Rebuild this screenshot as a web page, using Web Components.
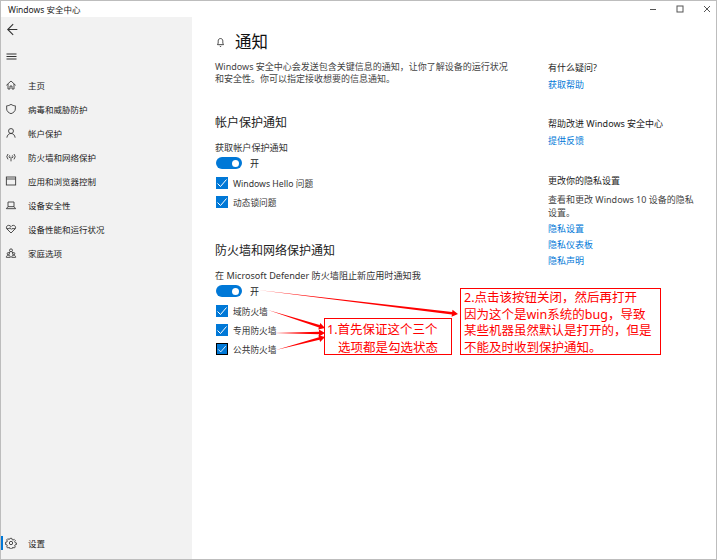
<!DOCTYPE html>
<html lang="zh">
<head>
<meta charset="utf-8">
<title>Windows 安全中心</title>
<style>
  html, body { margin: 0; background: #fff; }
  body { font-family: "Noto Sans", "Noto Sans CJK SC", sans-serif; color: #1f1f1f; }
</style>
</head>
<body>
<win-app>
  <nav-item slot="nav" icon="home">主页</nav-item>
  <nav-item slot="nav" icon="shield">病毒和威胁防护</nav-item>
  <nav-item slot="nav" icon="user">帐户保护</nav-item>
  <nav-item slot="nav" icon="wifi">防火墙和网络保护</nav-item>
  <nav-item slot="nav" icon="browser">应用和浏览器控制</nav-item>
  <nav-item slot="nav" icon="laptop">设备安全性</nav-item>
  <nav-item slot="nav" icon="heart">设备性能和运行状况</nav-item>
  <nav-item slot="nav" icon="family">家庭选项</nav-item>
  <nav-item slot="settings" icon="gear" active>设置</nav-item>

  <notify-group title="帐户保护通知" label="获取帐户保护通知" first>
    <check-row>Windows Hello 问题</check-row>
    <check-row>动态锁问题</check-row>
  </notify-group>
  <notify-group title="防火墙和网络保护通知" label="在 Microsoft Defender 防火墙阻止新应用时通知我">
    <check-row>域防火墙</check-row>
    <check-row>专用防火墙</check-row>
    <check-row focused>公共防火墙</check-row>
  </notify-group>

  <help-block slot="aside" title="有什么疑问?">
    <a href="#">获取帮助</a>
  </help-block>
  <help-block slot="aside" title="帮助改进 Windows 安全中心">
    <a href="#">提供反馈</a>
  </help-block>
  <help-block slot="aside" title="更改你的隐私设置" text="查看和更改 Windows 10 设备的隐私设置。">
    <a href="#">隐私设置</a>
    <a href="#">隐私仪表板</a>
    <a href="#">隐私声明</a>
  </help-block>
</win-app>
<note-layer></note-layer>

<script>
const ICONS = {
  back: '<path d="M11 2.500 4.500 9l6.500 6.500M4.500 9H16"/>',
  menu: '<path d="M3 6h12M3 9h12M3 12h12"/>',
  home: '<path d="M2 9.500 9 3l7 6.500M4.500 7.500V15H7.500V10.500H10.500V15H13.500V7.500"/>',
  shield: '<path d="M9 2C7 3.500 4.500 4.200 2.500 4.200V9c0 3.200 2.700 5.700 6.500 7 3.800-1.300 6.500-3.800 6.500-7V4.200C13.500 4.200 11 3.500 9 2Z"/>',
  user: '<circle cx="9" cy="6" r="3.700"/><path d="M2.800 16c.4-3.700 2.900-6.300 6.200-6.300s5.800 2.600 6.200 6.300"/>',
  wifi: '<path d="M9 8.500v7M7 6.500a3 3 0 0 0 0 4M11 6.500a3 3 0 0 1 0 4M4.500 4.500a6 6 0 0 0 0 8M13.500 4.500a6 6 0 0 1 0 8"/>',
  browser: '<rect x="2" y="3" width="14" height="12"/><path d="M2 6h14"/>',
  laptop: '<path d="M4.500 4.500h9v7h-9zM4.500 11.500l-2.500 3h14l-2.500-3"/>',
  heart: '<path d="M9 15 2.800 8.800C1.300 7.100 2.200 3.500 5.500 3.500 7.200 3.500 8.300 4.500 9 5.500c.7-1 1.800-2 3.500-2 3.300 0 4.200 3.600 2.700 5.300Z"/><path d="M2.500 8.500h4l1-1.500 2 2.500 1-1h5"/>',
  family: '<circle cx="9" cy="5" r="2.200"/><circle cx="5" cy="10" r="1.700"/><circle cx="13" cy="10" r="1.700"/><path d="M6 9.500 7.500 7M12 9.500 10.500 7M2 15.500c0-2 1.200-3.200 3-3.200s3 1.200 3 3.200zM10 15.500c0-2 1.200-3.200 3-3.200s3 1.200 3 3.200z"/>',
  gear: '<circle cx="9" cy="9" r="2.500"/><path d="M7.800 2h2.400l.4 1.900 1.500.7 1.700-1 1.700 1.700-1 1.700.7 1.500 1.900.4v2.400l-1.900.4-.7 1.500 1 1.700-1.700 1.700-1.700-1-1.500.7-.4 1.900H7.800l-.4-1.900-1.500-.7-1.700 1-1.700-1.700 1-1.700-.7-1.500-1.900-.4V7.900l1.900-.4.700-1.500-1-1.700 1.700-1.700 1.700 1 1.500-.7Z"/>',
  bell: '<path d="M9 2.500c-2.500 0-3.800 1.800-3.800 4.200v3.300L4 12.500h10l-1.200-2.500V6.700c0-2.400-1.300-4.200-3.800-4.200ZM7.500 14.500c.4.700.9 1 1.500 1s1.100-.3 1.500-1"/>'
};

function iconSvg(name, size) {
  return `<svg width="${size}" height="${size}" viewBox="0 0 18 18" fill="none" stroke="currentColor" stroke-width="1.300">${ICONS[name]}</svg>`;
}

// Window frame: title bar, sidebar, main column and right column
class WinApp extends HTMLElement {
  connectedCallback() {
    this.attachShadow({ mode: 'open' }).innerHTML = `
      <style>
        :host {
          display: flex;
          flex-direction: column;
          box-sizing: border-box;
          width: 717px;
          height: 560px;
          border: 1px solid #bdbdbd;
          background: #fff;
          font-size: 9px;
        }
        .titlebar {
          height: 16px;
          flex: none;
          display: flex;
          align-items: center;
          justify-content: space-between;
          padding-left: 7px;
          font-size: 8.500px;
          color: #222;
        }
        .controls { display: flex; align-items: center; }
        .controls svg { display: block; margin: 0 5px 0 14px; color: #555; }
        .body { flex: 1; display: flex; min-height: 0; }
        .sidebar {
          width: 191px;
          flex: none;
          background: #f2f2f2;
          display: flex;
          flex-direction: column;
          padding-bottom: 4px;
          box-sizing: border-box;
        }
        .tool { height: 27px; display: flex; align-items: center; padding-left: 3px; color: #333; }
        .back { margin-top: -2px; height: 28px; }
        .menu { margin-bottom: 3px; }
        .nav { display: flex; flex-direction: column; }
        .bottom { margin-top: auto; }
        .main { width: 333px; flex: none; padding: 13px 0 0 23px; box-sizing: content-box; }
        .head { display: flex; align-items: center; height: 24px; }
        .head svg { margin-right: 9px; color: #222; }
        h1 { margin: 0; font-size: 16.500px; font-weight: 400; color: #111; line-height: 24px; }
        p { margin: 7px 0 0; width: 300px; line-height: 12px; color: #444; }
        .aside { width: 150px; padding-top: 45px; }
      </style>
      <div class="titlebar">
        <span>Windows 安全中心</span>
        <span class="controls">
          <svg width="8" height="8" viewBox="0 0 8 8" stroke="currentColor" fill="none"><path d="M1 4.500h6"/></svg>
          <svg width="8" height="8" viewBox="0 0 8 8" stroke="currentColor" fill="none"><rect x="1" y="1" width="6" height="6"/></svg>
          <svg width="8" height="8" viewBox="0 0 8 8" stroke="currentColor" fill="none"><path d="M1 1l6 6M7 1 1 7"/></svg>
        </span>
      </div>
      <div class="body">
        <div class="sidebar">
          <div class="tool back">${iconSvg('back', 15)}</div>
          <div class="tool menu">${iconSvg('menu', 15)}</div>
          <div class="nav"><slot name="nav"></slot></div>
          <div class="bottom"><slot name="settings"></slot></div>
        </div>
        <div class="main">
          <div class="head">${iconSvg('bell', 11)}<h1>通知</h1></div>
          <p>Windows 安全中心会发送包含关键信息的通知，让你了解设备的运行状况和安全性。你可以指定接收想要的信息通知。</p>
          <slot></slot>
        </div>
        <div class="aside"><slot name="aside"></slot></div>
      </div>`;
  }
}

class NavItem extends HTMLElement {
  connectedCallback() {
    this.attachShadow({ mode: 'open' }).innerHTML = `
      <style>
        :host {
          display: flex;
          align-items: center;
          height: 24px;
          position: relative;
          font-size: 8.500px;
          color: #222;
        }
        svg { flex: none; margin: 0 11px 0 4px; color: #333; }
        .mark { width: 2px; height: 14px; background: #0078d7; position: absolute; left: 0; top: 5px; }
      </style>
      ${this.hasAttribute('active') ? '<span class="mark"></span>' : ''}
      ${iconSvg(this.getAttribute('icon'), 12)}
      <slot></slot>`;
  }
}

class ToggleSwitch extends HTMLElement {
  connectedCallback() {
    this.attachShadow({ mode: 'open' }).innerHTML = `
      <style>
        :host { display: flex; align-items: center; height: 12px; margin: 3px 0 0 1px; }
        .track { width: 26px; height: 12px; border-radius: 6px; background: #0078d7; position: relative; }
        .knob { width: 7px; height: 7px; border-radius: 50%; background: #fff; position: absolute; right: 3px; top: 2.500px; }
        span.txt { margin-left: 8px; color: #222; }
      </style>
      <div class="track"><div class="knob"></div></div>
      <span class="txt">开</span>`;
  }
}

class CheckRow extends HTMLElement {
  connectedCallback() {
    const focused = this.hasAttribute('focused');
    this.attachShadow({ mode: 'open' }).innerHTML = `
      <style>
        :host { display: flex; align-items: center; height: 12px; margin: 7px 0 0 1px; color: #333; font-size: 8.700px; }
        :host(:first-of-type) { margin-top: 8px; }
        .box {
          width: 12px; height: 12px; flex: none; box-sizing: border-box; background: #0078d7;
          margin-right: 5px; ${focused ? 'border: 1px solid #000;' : ''}
        }
        svg { display: block; }
      </style>
      <div class="box">
        <svg width="${focused ? 10 : 12}" height="${focused ? 10 : 12}" viewBox="0 0 12 12" fill="none" stroke="#fff" stroke-width="1"><path d="M1.500 6.500 4.500 9.500 10.500 2.500"/></svg>
      </div>
      <slot></slot>`;
  }
}

class NotifyGroup extends HTMLElement {
  connectedCallback() {
    this.attachShadow({ mode: 'open' }).innerHTML = `
      <style>
        :host { display: block; margin-top: 35px; }
        :host([first]) { margin-top: 30px; }
        h2 { margin: 0; font-size: 12px; font-weight: 400; line-height: 16px; color: #222; }
        .label { margin-top: 11px; line-height: 12px; font-size: 9.100px; color: #333; white-space: nowrap; }
      </style>
      <h2>${this.getAttribute('title')}</h2>
      <div class="label">${this.getAttribute('label')}</div>
      <toggle-switch></toggle-switch>
      <slot></slot>`;
  }
}

class HelpBlock extends HTMLElement {
  connectedCallback() {
    const text = this.getAttribute('text');
    this.attachShadow({ mode: 'open' }).innerHTML = `
      <style>
        :host { display: block; margin-bottom: 27px; line-height: 12px; }
        :host(:last-child) { margin-top: 28px; }
        .title { color: #222; white-space: nowrap; }
        p { margin: 6px 0 0; line-height: 13px; color: #444; width: 148px; }
        ::slotted(a) { display: block; margin-top: 4px; color: #0078d7; text-decoration: none; }
        .links { padding-top: 1px; }
        p + .links { padding-top: 0; }
      </style>
      <div class="title">${this.getAttribute('title')}</div>
      ${text ? `<p>${text}</p>` : ''}
      <div class="links"><slot></slot></div>`;
  }
}

// Red annotations drawn over the screenshot
class NoteLayer extends HTMLElement {
  connectedCallback() {
    // tapered arrow: thin at the start, wide at the tip
    const arrow = (x1, y1, x2, y2) => {
      const len = Math.hypot(x2 - x1, y2 - y1);
      const ux = (x2 - x1) / len, uy = (y2 - y1) / len;
      const nx = -uy, ny = ux;
      const bx = x2 - ux * 6, by = y2 - uy * 6;
      const p = (x, y) => `${x.toFixed(1)},${y.toFixed(1)}`;
      return `<polygon fill="#f00" points="${[
        p(x1, y1),
        p(bx + nx * 1.300, by + ny * 1.300),
        p(bx + nx * 3.500, by + ny * 3.500),
        p(x2, y2),
        p(bx - nx * 3.500, by - ny * 3.500),
        p(bx - nx * 1.300, by - ny * 1.300)
      ].join(' ')}"/>`;
    };
    this.attachShadow({ mode: 'open' }).innerHTML = `
      <style>
        :host { position: absolute; left: 0; top: 0; width: 720px; height: 560px; pointer-events: none; }
        svg { position: absolute; left: 0; top: 0; }
        .box {
          position: absolute; box-sizing: border-box; border: 1px solid #f00; background: #fff; color: #f00;
          font-size: 12.500px; font-family: "Noto Sans", "Noto Sans CJK SC", sans-serif; white-space: nowrap;
        }
        .one { left: 324px; top: 318px; width: 128px; height: 37px; padding: 2px 0 0 2px; line-height: 17.500px; }
        .one span { display: block; }
        .one span + span { padding-left: 11px; }
        .two { left: 460px; top: 288px; width: 201px; height: 67px; padding: 1px 0 0 3px; line-height: 16.700px; }
      </style>
      <svg width="720" height="560">
        ${arrow(258, 290, 458, 314)}
        ${arrow(268, 310, 325, 328)}
        ${arrow(274, 333, 325, 333)}
        ${arrow(276, 350, 325, 337)}
      </svg>
      <div class="box one"><span>1.首先保证这个三个</span><span>选项都是勾选状态</span></div>
      <div class="box two">2.点击该按钮关闭，然后再打开<br>因为这个是win系统的bug，导致<br>某些机器虽然默认是打开的，但是<br>不能及时收到保护通知。</div>`;
  }
}

customElements.define('win-app', WinApp);
customElements.define('nav-item', NavItem);
customElements.define('toggle-switch', ToggleSwitch);
customElements.define('check-row', CheckRow);
customElements.define('notify-group', NotifyGroup);
customElements.define('help-block', HelpBlock);
customElements.define('note-layer', NoteLayer);
</script>
</body>
</html>
